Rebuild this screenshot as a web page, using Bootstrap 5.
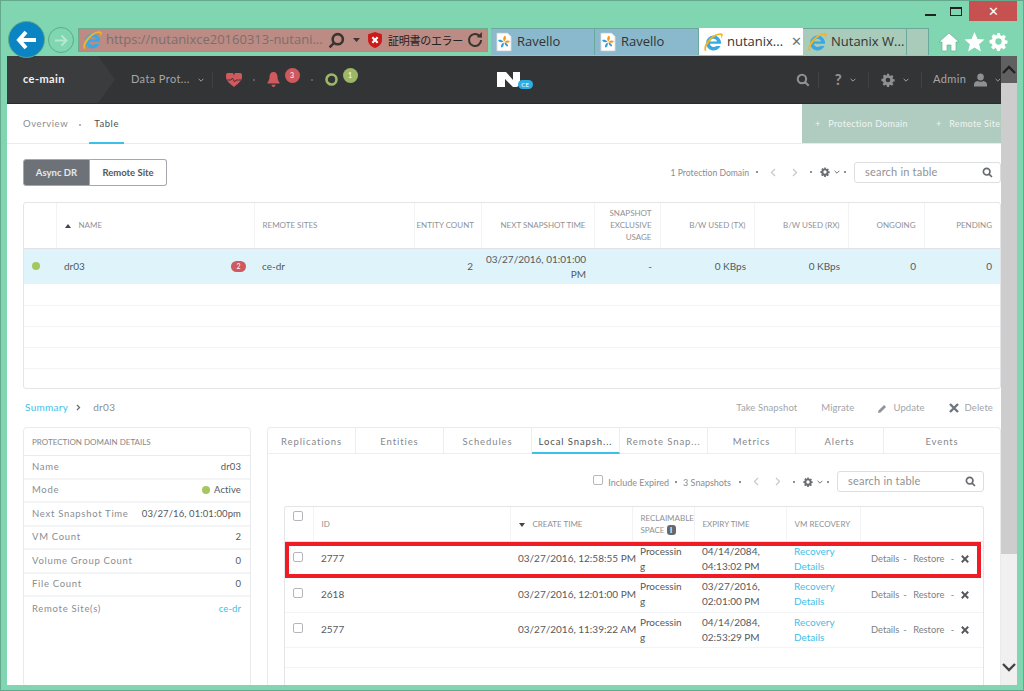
<!DOCTYPE html>
<html>
<head>
  <title>Nutanix - Protection Domains</title>
  <link href="https://cdn.jsdelivr.net/npm/bootstrap@5.3.2/dist/css/bootstrap.min.css" rel="stylesheet">
  <style>
    html, body { height: 100%; overflow: hidden; }
    body { font-family: Lato, "Liberation Sans", sans-serif; font-size: 10px; color: #55585c; background: #7fd6b0; }
    .win { width: 1024px; height: 691px; border: 1px solid #64a88d; padding: 0 6px 6px 6px; }

    /* browser chrome */
    .chrome { height: 55px; }
    .caption { height: 27px; }
    .cap-btn { width: 26px; height: 20px; }
    .cap-min { width: 11px; height: 2px; background: #222; margin-top: 8px; }
    .cap-max { width: 12px; height: 9px; border: 1px solid #222; border-top-width: 2px; }
    .cap-close { width: 48px; height: 20px; background: #c75050; color: #fff; font-size: 13px; line-height: 20px; text-align: center; }
    .nav-row { height: 28px; }
    .back-btn { width: 37px; height: 37px; border-radius: 50%; background: #0b84c4; border: 1px solid #5aa78e; margin-top: -7px; margin-left: 1px; position: relative; z-index: 3; }
    .fwd-btn { width: 26px; height: 26px; border-radius: 50%; border: 1px solid #5fa98f; margin-left: 3px; margin-top: -1px; }
    .addr { width: 410px; height: 24px; background: #bb8b84; border: 1px solid #6dab90; margin-left: 4px; font-family: "Open Sans", sans-serif; font-size: 13px; color: #7b6f6c; padding-left: 3px; white-space: nowrap; }
    .addr .cert { font-family: "Noto Sans CJK JP", sans-serif; font-size: 11px; color: #222; letter-spacing: -.3px; margin-left: 6px; }
    .mag { color: #3b3532; transform: scaleX(-1); }
    .tab-strip { margin-left: 3px; }
    .tab-b { height: 27px; width: 104px; background: #8ab9cd; border: 1px solid #6aa89b; border-width: 1px 1px 0 0; font-family: "Open Sans", sans-serif; font-size: 13px; color: #333; padding-left: 4px; white-space: nowrap; }
    .tab-b.on { background: #fff; border: 0; }
    .tab-b.idle { background: #a9cbb9; }
    .tab-b.blank { background: #a9cbb9; width: 22px; }
    .tab-x { margin-left: 4px; }
    .ie-tools { height: 27px; margin-left: 9px; }

    /* app frame */
    .frame { height: 629px; background: #fff; }
    .app { width: 994px; overflow: hidden; }
    .vscroll { width: 16px; background: #f0f0f0; }
    .vs-up { height: 27px; background: #606060; color: #222; }
    .vs-thumb { height: 471px; background: #cdcdcd; }
    .vs-down { padding-bottom: 13px; }

    .topbar { height: 48px; background: #333436; border-bottom: 1px solid #2a2b2d; color: #a6a7a8; font-size: 11px; letter-spacing: .4px; }
    .crumb { width: 108px; height: 47px; background: #3b3c3e; clip-path: polygon(0 0, 91px 0, 108px 50%, 91px 100%, 0 100%); color: #f2f2f2; font-weight: 700; padding-left: 16px; }
    .top-sep { width: 1px; height: 16px; background: #414244; }
    .heart { margin-left: 13px; }
    .dot-sep { width: 2px; height: 2px; background: #6c6d6f; border-radius: 50%; flex: none; }
    .top-dot { margin: 0 12px 0 11px; }
    .count { width: 15px; height: 15px; border-radius: 50%; color: #fff; font-size: 7px; text-align: center; line-height: 15px; margin: -8px 0 0 5px; }
    .bg-crit { background: #d0595e; }
    .bg-ok { background: #9cb767; }
    .logo { margin-left: 139px; margin-right: auto; }
    .ce-pill { background: #2bb0e6; color: #fff; font-size: 6px; line-height: 9px; width: 15px; margin: 0 0 -2px -2px; }
    .help { font-size: 15px; font-weight: 900; color: #8f9092; }
    .admin { width: 68px; margin-left: 7px; }
    .grey-icon { color: #8f9092; fill: #8f9092; }

    .subnav { height: 40px; border-bottom: 1px solid #e8eaec; }
    .sub-left { padding-left: 16px; height: 40px; }
    .subnav a { color: #8a8d91; text-decoration: none; font-size: 9.5px; letter-spacing: .6px; line-height: 40px; }
    .subnav .dot-sep { background: #9a9da1; margin: 2px 0 0 11px; }
    .subnav a.sub-tab { height: 40px; padding: 0 5px; border-bottom: 2px solid #3ebfe9; color: #4d5055; margin-left: 8px; }
    .sub-actions { width: 199px; height: 39px; background: #b0ccc0; color: #eef5f1; font-size: 9px; letter-spacing: .3px; white-space: nowrap; padding-left: 13px; gap: 28px; }

    .page-body { padding: 14px 0 0 16px; }
    .bar-top { height: 28px; }
    .toggle-btn { height: 27px; font-size: 9.5px; border: 1px solid #a4a8ad; font-weight: 700; line-height: 25px; text-align: center; }
    .tg-a { width: 67px; background: #6d7278; color: #e6e8ea; border-radius: 3px 0 0 3px; }
    .tg-b { width: 77px; background: #fff; color: #54575b; border-radius: 0 3px 3px 0; border-left: 0; }

    .search { width: 147px; height: 21px; border: 1px solid #dcdee1; border-radius: 3px; font-size: 11px; color: #8f9296; padding: 0 7px 0 10px; letter-spacing: .2px; }
    .search svg { color: #666a6e; }
    .tools { color: #8a8d91; font-size: 8.6px; }
    .tools > span:not(.chk) { padding-top: 2px; }
    .tools .gear-sm { fill: #6a6d71; }
    .tools .chev-sm { color: #6a6d71; }
    .g7 { margin-left: 7px; }
    .g12 { margin-left: 12px; }
    .g6 { margin: 0 6px; }
    .tools .chk { margin: -3px 5px 0 0; }

    .grid-box { border: 1px solid #e3e5e8; border-radius: 3px; overflow: hidden; margin-top: 16px; height: 187px; }
    table.pd { table-layout: fixed; width: 100%; margin: 0; border-collapse: collapse; }
    table.pd th { font-weight: 400; font-size: 8px; color: #8f9296; text-transform: uppercase; vertical-align: middle; border-right: 1px solid #f2f3f4; border-bottom: 1px solid #e0e2e5; padding: 0 8px; line-height: 12px; }
    table.pd th:last-child { border-right: 0; }
    table.pd td { font-size: 10px; color: #56595d; vertical-align: middle; padding: 0 8px; line-height: 15px; border-bottom: 1px solid #f3f4f5; }
    table.pd tr.sel td { background: #dff3fb; border-bottom: 0; padding-top: 1px; }
    table.pd th.tight { white-space: nowrap; padding-left: 2px; }
    table.pd td.next-time { padding-left: 3px; }
    .hd-row { height: 45px; }
    .sel { height: 36px; }
    .empty-row { height: 21px; }
    .w28 { width: 28px; } .w32 { width: 32px; } .w62 { width: 62px; } .w66 { width: 66px; } .w67 { width: 67px; }
    .w74 { width: 74px; } .w76 { width: 76px; } .w92 { width: 92px; } .w94 { width: 94px; } .w113 { width: 113px; }
    .w122 { width: 122px; } .w160 { width: 160px; } .w197 { width: 197px; } .w198 { width: 198px; }
    .status { width: 8px; height: 8px; border-radius: 50%; background: #a6c660; display: inline-block; }
    .alert-pill { width: 15px; height: 11px; border-radius: 6px; background: #d0595e; color: #fff; font-size: 7px; line-height: 11px; text-align: center; }

    .mid-bar { height: 38px; padding-right: 8px; }
    .crumb2 { font-size: 10px; letter-spacing: .3px; color: #8a8d91; padding: 0 0 2px 2px; }
    .crumb2 a, .link { color: #3ebfe9; text-decoration: none; }
    .actions { color: #a2a5a9; font-size: 9.5px; letter-spacing: .1px; }
    .x-gap { margin-left: 6px; }

    .details { width: 228px; height: 260px; border: 1px solid #e8eaec; border-radius: 4px; flex: none; }
    .det-head { height: 28px; font-size: 8px; color: #85888c; text-transform: uppercase; border-bottom: 1px solid #e8eaec; padding: 0 8px; }
    .det-row { height: 23.5px; font-size: 9.5px; letter-spacing: .7px; color: #8a8d91; border-bottom: 2px solid #f3f4f5; padding: 0 9px 0 8px; white-space: nowrap; }
    .det-row:last-child { border: 0; }
    .det-row > :last-child { color: #56595d; letter-spacing: .1px; }
    .det-row > a:last-child { color: #3ebfe9; text-decoration: none; }

    .tabs-panel { width: 734px; height: 260px; border: 1px solid #e8eaec; border-bottom: 0; border-radius: 4px 4px 0 0; flex: none; }
    .ptabs { height: 26px; border-bottom: 1px solid #eceef0; }
    .ptab { width: 88px; font-size: 9.5px; letter-spacing: .9px; color: #85888c; text-align: center; line-height: 27px; border-right: 1px solid #eceef0; white-space: nowrap; }
    .ptab.on { color: #4d5055; border-bottom: 2px solid #3ebfe9; height: 26px; }
    .ptab:last-child { border: 0; flex: 1; }
    .snap-tools { height: 52px; padding: 3px 16px 0 0; font-size: 9px; }
    .snap-wrap { position: relative; margin: 0 16px; border: 1px solid #e3e5e8; border-bottom: 0; border-radius: 3px 3px 0 0; }
    .red-mark { position: absolute; left: 0; top: 35px; width: 696px; height: 36px; border: 4px solid #ee1c25; pointer-events: none; }
    .chk { width: 10px; height: 10px; border: 1px solid #b4b8bc; border-radius: 2px; display: inline-block; background: #fff; }
    .snap-head { height: 34px; }
    table.pd th.chk-cell { vertical-align: top; padding: 4px 8px 0; }
    .snap .r1 { height: 35.5px; }
    table.pd td.date { white-space: nowrap; padding-right: 0; }
    table.pd td.wrap-all { word-break: break-all; }
    table.pd th.recl { white-space: nowrap; padding-right: 0; }
    .info-i { width: 9px; height: 10px; background: #666a6f; color: #fff; font-size: 7px; line-height: 10px; border-radius: 3px; display: inline-block; text-align: center; font-weight: 700; }
    table.pd td.row-act { color: #7c7f83; white-space: nowrap; font-size: 9.3px; padding: 0 0 0 11px; }
    .row-act svg { color: #55585c; margin-left: 3px; vertical-align: -1px; }
    .blank-row { height: 20px; }
  </style>
</head>
<body>

<svg width="0" height="0" class="position-absolute">
  <symbol id="ie" viewBox="0 0 20 20">
    <path fill-rule="evenodd" d="M10.500 3.500a7.500 7.500 0 1 0 7 10.500h-4.200a3.800 3.800 0 0 1-6.400-2.200H18a7.500 7.500 0 0 0-7.500-8.300zM7 9.500a3.600 3.600 0 0 1 7 0z" fill="#39a9e1"/>
    <path d="M2 19C-.5 16 4 7 10.500 3.500c4.500-2.500 8-3 9-1.500.7 1.200-.2 3-1.500 5 .3-1.800.6-3-.2-3.700-1.500-1.300-6.300 1-9.300 4C5 11.800 1.800 15.800 3.500 18.300 3 18.900 2.300 19.300 2 19z" fill="#f0b429"/>
  </symbol>
  <symbol id="rav" viewBox="0 0 20 22">
    <path d="M2 1h12l4 4v16H2z" fill="#fff" stroke="#c4c4c4" stroke-width=".8"/>
    <path d="M10 10.500C8.500 8 9 5 10.800 4c2.200 .7 1.800 4.500-.8 6.500zM10.500 11c2-1.800 4.500-2 6-.8-.8 2-4 2.300-6 .8z" fill="#f39a1e"/>
    <path d="M9.500 10.500C7.500 8.500 5 8 3.500 9c.6 2.200 3.800 2.800 6 1.500zM9.500 11.500c-2.200 1-3.300 3.500-2.700 5.500 2.300 .2 3.700-3 2.700-5.500zM10.500 11.500c.2 2.300 1.800 4.300 3.800 4.500.8-2-1.300-4.300-3.800-4.500z" fill="#2f9fd8"/>
  </symbol>
  <symbol id="gear" viewBox="-1 -1 18 18">
    <path fill-rule="evenodd" d="M6.600 0h2.800l.4 2.200 1.300.6 1.900-1.300 2 2-1.300 1.900.6 1.300 2.200.4v2.800l-2.200.4-.6 1.300 1.300 1.900-2 2-1.900-1.300-1.300.6-.4 2.200H6.600l-.4-2.200-1.300-.6-1.900 1.300-2-2 1.300-1.900-.6-1.300L-.5 9.400V6.600l2.200-.4.6-1.300L1.500 3l2-2 1.900 1.300 1.300-.6zM8 5a3 3 0 1 0 0 6 3 3 0 0 0 0-6z"/>
  </symbol>
  <symbol id="search" viewBox="0 0 16 16">
    <path fill="none" stroke="currentColor" stroke-width="2.400" d="M6.800 2a4.800 4.800 0 1 0 0 9.600 4.800 4.800 0 0 0 0-9.600zM10.300 10.300l4.200 4.200"/>
  </symbol>
  <symbol id="chev-d" viewBox="0 0 10 6">
    <path fill="none" stroke="currentColor" stroke-width="1.600" d="M1 1l4 4 4-4"/>
  </symbol>
  <symbol id="xmark" viewBox="0 0 10 10">
    <path fill="none" stroke="currentColor" stroke-width="2.400" d="M1 1l8 8M9 1l-8 8"/>
  </symbol>
  <symbol id="prev" viewBox="0 0 6 9">
    <path d="M5 1L1.500 4.500 5 8" fill="none" stroke="#c8cacd" stroke-width="1.300"/>
  </symbol>
  <symbol id="next" viewBox="0 0 6 9">
    <path d="M1 1l3.500 3.500L1 8" fill="none" stroke="#c8cacd" stroke-width="1.300"/>
  </symbol>
</svg>

<div class="win d-flex flex-column">

  <!-- IE chrome -->
  <div class="chrome">
    <div class="caption d-flex justify-content-end align-items-start">
      <div class="cap-btn d-flex align-items-center justify-content-center"><div class="cap-min"></div></div>
      <div class="cap-btn d-flex align-items-center justify-content-center"><div class="cap-max"></div></div>
      <div class="cap-close">&#10005;</div>
    </div>
    <div class="nav-row d-flex align-items-start">
      <div class="back-btn d-flex align-items-center justify-content-center">
        <svg width="22" height="20" viewBox="0 0 22 20"><path d="M10 2L3 10l7 8M3 10h17" fill="none" stroke="#fff" stroke-width="4"/></svg>
      </div>
      <div class="fwd-btn d-flex align-items-center justify-content-center">
        <svg width="14" height="13" viewBox="0 0 14 13"><path d="M7.500 1.500l5 5-5 5M12 6.500H1" fill="none" stroke="#b9e6d2" stroke-width="2"/></svg>
      </div>
      <div class="addr d-flex align-items-center">
        <svg width="20" height="20"><use href="#ie"/></svg>
        <span class="ms-1 flex-grow-1">https://nutanixce20160313-nutani...</span>
        <svg class="mag" width="17" height="17"><use href="#search"/></svg>
        <svg class="ms-2" width="7" height="4"><path d="M0 0h7L3.500 4z" fill="#3b3532"/></svg>
        <svg class="ms-2" width="14" height="16" viewBox="0 0 13 15"><path d="M6.500 0L13 2v6c0 3-3 6-6.500 7C3 14 0 11 0 8V2z" fill="#cc1a1a"/><path d="M4 5l5 5M9 5l-5 5" stroke="#fff" stroke-width="2"/></svg>
        <span class="cert">証明書のエラー</span>
        <svg class="ms-1 me-1" width="16" height="16" viewBox="0 0 14 14"><path d="M11 3.500a5.300 5.300 0 1 0 1.300 3.500" fill="none" stroke="#3b3532" stroke-width="1.800"/><path d="M8.500 4.500L13 5V0z" fill="#3b3532"/></svg>
      </div>
      <div class="tab-strip d-flex">
        <div class="tab-b d-flex align-items-center gap-1"><svg width="18" height="20"><use href="#rav"/></svg>Ravello</div>
        <div class="tab-b d-flex align-items-center gap-1"><svg width="18" height="20"><use href="#rav"/></svg>Ravello</div>
        <div class="tab-b on d-flex align-items-center gap-1"><svg width="20" height="20"><use href="#ie"/></svg>nutanix...<span class="tab-x text-secondary">&#10005;</span></div>
        <div class="tab-b idle d-flex align-items-center gap-1"><svg width="20" height="20"><use href="#ie"/></svg>Nutanix W...</div>
        <div class="tab-b blank"></div>
      </div>
      <div class="ie-tools d-flex align-items-center gap-1">
        <svg width="22" height="20" viewBox="0 0 22 20"><path d="M11 1L1 10h3v9h5v-6h4v6h5v-9h3z" fill="#fff" stroke="#5aa78e" stroke-width=".6"/></svg>
        <svg width="21" height="20" viewBox="0 0 21 20"><path d="M10.500 0l3 7 7 .5-5.400 4.700 1.800 7.300-6.400-3.900-6.400 3.900 1.800-7.300L.5 7.500l7-.5z" fill="#fff"/></svg>
        <svg width="19" height="19" fill="#fff"><use href="#gear"/></svg>
      </div>
    </div>
  </div>

  <!-- page -->
  <div class="frame d-flex">
    <div class="app">

      <div class="topbar d-flex align-items-center">
        <div class="crumb d-flex align-items-center">ce-main</div>
        <div class="ms-3 d-flex align-items-center gap-2">Data Prot...
          <svg width="6" height="4"><use href="#chev-d"/></svg>
        </div>
        <div class="top-sep ms-2"></div>
        <svg class="heart" width="16" height="14" viewBox="0 0 16 14"><path d="M8 14C3 10 0 7.500 0 4a4 4 0 0 1 8-1.500A4 4 0 0 1 16 4c0 3.500-3 6-8 10z" fill="#d0595e"/><path d="M1 7h4l1.500-2L8.500 9l1.500-2h5" fill="none" stroke="#333436" stroke-width=".9"/></svg>
        <div class="dot-sep top-dot"></div>
        <svg width="13" height="15" viewBox="0 0 12 15"><path d="M6 0c2.800 0 4 2 4 5 0 3 1 4 2 5.500v1H0v-1C1 9 2 8 2 5c0-3 1.200-5 4-5zM4 12.800h4C8 14.300 7 15 6 15s-2-.7-2-2.200z" fill="#d0595e"/></svg>
        <div class="count bg-crit">3</div>
        <div class="dot-sep top-dot"></div>
        <svg width="13" height="13" viewBox="0 0 13 13"><circle cx="6.500" cy="6.500" r="5" fill="none" stroke="#9cb767" stroke-width="2.600"/></svg>
        <div class="count bg-ok">1</div>

        <div class="logo d-flex align-items-end">
          <svg width="23" height="15" viewBox="0 0 23 15"><path d="M0 0h9l7 8V0h7v12l-3 3h-4L8 7v8H0z" fill="#fff"/></svg>
          <div class="ce-pill rounded-pill text-center">CE</div>
        </div>

        <svg class="grey-icon" width="14" height="14"><use href="#search"/></svg>
        <div class="top-sep mx-2"></div>
        <div class="d-flex align-items-center gap-2 mx-2">
          <span class="help">?</span>
          <svg width="6" height="4"><use href="#chev-d"/></svg>
        </div>
        <div class="top-sep mx-1"></div>
        <div class="d-flex align-items-center gap-2 mx-2">
          <svg class="grey-icon" width="14" height="14"><use href="#gear"/></svg>
          <svg width="6" height="4"><use href="#chev-d"/></svg>
        </div>
        <div class="top-sep mx-1"></div>
        <div class="admin d-flex align-items-center gap-1">
          <span>Admin</span>
          <svg class="ms-1" width="14" height="14" viewBox="0 0 14 14"><path d="M7 0a3.500 3.500 0 0 1 3.500 4c0 2-1 3.500-3.500 3.500S3.500 6 3.500 4A3.500 3.500 0 0 1 7 0zM0 12c0-3 3-4 4-4 1 1 5 1 6 0 1 0 4 1 4 4v2H0z" fill="#8f9092"/></svg>
          <svg class="ms-1" width="6" height="4"><use href="#chev-d"/></svg>
        </div>
      </div>

      <div class="subnav d-flex align-items-start justify-content-between">
        <div class="sub-left d-flex align-items-center">
          <a href="#">Overview</a>
          <div class="dot-sep"></div>
          <a href="#" class="sub-tab">Table</a>
        </div>
        <div class="sub-actions d-flex align-items-center">
          <span>+ &nbsp; Protection Domain</span>
          <span>+ &nbsp; Remote Site</span>
        </div>
      </div>

      <div class="page-body">
        <div class="bar-top d-flex justify-content-between align-items-center">
          <div class="d-flex">
            <div class="toggle-btn tg-a">Async DR</div>
            <div class="toggle-btn tg-b">Remote Site</div>
          </div>
          <div class="d-flex align-items-center tools">
            <span>1 Protection Domain</span>
            <div class="dot-sep g7"></div>
            <svg class="g12" width="6" height="9"><use href="#prev"/></svg>
            <svg class="ms-3" width="6" height="9"><use href="#next"/></svg>
            <div class="dot-sep g12"></div>
            <svg class="gear-sm ms-2" width="10" height="10"><use href="#gear"/></svg>
            <svg class="chev-sm ms-1" width="6" height="4"><use href="#chev-d"/></svg>
            <div class="dot-sep ms-1 me-2"></div>
            <div class="search d-flex align-items-center justify-content-between">
              <span>search in table</span>
              <svg width="11" height="11"><use href="#search"/></svg>
            </div>
          </div>
        </div>

        <div class="grid-box">
          <table class="pd">
            <colgroup>
              <col class="w32"><col class="w198"><col class="w160"><col class="w67"><col class="w113"><col class="w66"><col class="w94"><col class="w94"><col class="w76"><col>
            </colgroup>
            <thead>
              <tr class="hd-row">
                <th></th>
                <th><svg width="6" height="4" class="me-2"><path d="M3 0l3 4H0z" fill="#444"/></svg>Name</th>
                <th>Remote Sites</th>
                <th class="text-end tight">Entity Count</th>
                <th class="text-end">Next Snapshot Time</th>
                <th class="text-end">Snapshot Exclusive Usage</th>
                <th class="text-end">B/W Used (TX)</th>
                <th class="text-end">B/W Used (RX)</th>
                <th class="text-end">Ongoing</th>
                <th class="text-end">Pending</th>
              </tr>
            </thead>
            <tbody>
              <tr class="sel">
                <td><span class="status"></span></td>
                <td><div class="d-flex justify-content-between align-items-center">dr03<div class="alert-pill">2</div></div></td>
                <td>ce-dr</td>
                <td class="text-end">2</td>
                <td class="text-end next-time">03/27/2016, 01:01:00 PM</td>
                <td class="text-end">-</td>
                <td class="text-end">0 KBps</td>
                <td class="text-end">0 KBps</td>
                <td class="text-end">0</td>
                <td class="text-end">0</td>
              </tr>
              <tr class="empty-row"><td colspan="10"></td></tr>
              <tr class="empty-row"><td colspan="10"></td></tr>
              <tr class="empty-row"><td colspan="10"></td></tr>
              <tr class="empty-row"><td colspan="10"></td></tr>
            </tbody>
          </table>
        </div>

        <div class="mid-bar d-flex justify-content-between align-items-center">
          <div class="crumb2 d-flex align-items-center gap-2">
            <a href="#">Summary</a>
            <svg width="5" height="7" viewBox="0 0 5 7"><path d="M1 1l2.500 2.500L1 6" fill="none" stroke="#6a6d71" stroke-width="1.300"/></svg>
            <span class="ms-1">dr03</span>
          </div>
          <div class="actions d-flex align-items-center">
            <span>Take Snapshot</span>
            <span class="ms-4">Migrate</span>
            <svg class="ms-4" width="9" height="9" viewBox="0 0 9 9"><path d="M0 9l.6-2.500L6 1l2 2-5.500 5.400z" fill="#8f9296"/></svg>
            <span class="x-gap">Update</span>
            <svg class="ms-4 text-secondary" width="10" height="10"><use href="#xmark"/></svg>
            <span class="x-gap">Delete</span>
          </div>
        </div>

        <div class="d-flex gap-3">
          <!-- details -->
          <div class="details">
            <div class="det-head d-flex align-items-center">Protection Domain Details</div>
            <div class="det-row d-flex justify-content-between align-items-center"><span>Name</span><span>dr03</span></div>
            <div class="det-row d-flex justify-content-between align-items-center"><span>Mode</span><span class="d-flex align-items-center gap-1"><i class="status"></i>Active</span></div>
            <div class="det-row d-flex justify-content-between align-items-center"><span>Next Snapshot Time</span><span>03/27/16, 01:01:00pm</span></div>
            <div class="det-row d-flex justify-content-between align-items-center"><span>VM Count</span><span>2</span></div>
            <div class="det-row d-flex justify-content-between align-items-center"><span>Volume Group Count</span><span>0</span></div>
            <div class="det-row d-flex justify-content-between align-items-center"><span>File Count</span><span>0</span></div>
            <div class="det-row d-flex justify-content-between align-items-center"><span>Remote Site(s)</span><a href="#">ce-dr</a></div>
          </div>

          <!-- tabs -->
          <div class="tabs-panel">
            <div class="ptabs d-flex">
              <div class="ptab">Replications</div>
              <div class="ptab">Entities</div>
              <div class="ptab">Schedules</div>
              <div class="ptab on">Local Snapsh...</div>
              <div class="ptab">Remote Snap...</div>
              <div class="ptab">Metrics</div>
              <div class="ptab">Alerts</div>
              <div class="ptab">Events</div>
            </div>

            <div class="snap-tools d-flex justify-content-end align-items-center tools">
              <span class="chk"></span>
              <span>Include Expired</span>
              <div class="dot-sep g6"></div>
              <span>3 Snapshots</span>
              <div class="dot-sep ms-2"></div>
              <svg class="g12" width="6" height="9"><use href="#prev"/></svg>
              <svg class="ms-3" width="6" height="9"><use href="#next"/></svg>
              <div class="dot-sep g12"></div>
              <svg class="gear-sm ms-2" width="10" height="10"><use href="#gear"/></svg>
              <svg class="chev-sm ms-1" width="6" height="4"><use href="#chev-d"/></svg>
              <div class="dot-sep ms-1 me-2"></div>
              <div class="search d-flex align-items-center justify-content-between">
                <span>search in table</span>
                <svg width="11" height="11"><use href="#search"/></svg>
              </div>
            </div>

            <div class="snap-wrap">
              <table class="pd snap">
                <colgroup>
                  <col class="w28"><col class="w197"><col class="w122"><col class="w62"><col class="w92"><col class="w74"><col>
                </colgroup>
                <thead>
                  <tr class="snap-head">
                    <th class="chk-cell"><span class="chk"></span></th>
                    <th>ID</th>
                    <th><svg width="6" height="4" class="me-2"><path d="M0 0h6L3 4z" fill="#444"/></svg>Create Time</th>
                    <th class="recl">Reclaimable<br>Space <span class="info-i">i</span></th>
                    <th>Expiry Time</th>
                    <th>VM Recovery</th>
                    <th></th>
                  </tr>
                </thead>
                <tbody>
                  <tr class="r1">
                    <td class="px-2"><span class="chk"></span></td>
                    <td>2777</td>
                    <td class="date">03/27/2016, 12:58:55 PM</td>
                    <td class="wrap-all">Processing</td>
                    <td>04/14/2084, 04:13:02 PM</td>
                    <td><a href="#" class="link">Recovery Details</a></td>
                    <td class="row-act">Details<span class="mx-1">-</span> Restore <span class="mx-1">-</span><svg width="8" height="8"><use href="#xmark"/></svg></td>
                  </tr>
                  <tr class="r1">
                    <td class="px-2"><span class="chk"></span></td>
                    <td>2618</td>
                    <td class="date">03/27/2016, 12:01:00 PM</td>
                    <td class="wrap-all">Processing</td>
                    <td>03/27/2016, 02:01:00 PM</td>
                    <td><a href="#" class="link">Recovery Details</a></td>
                    <td class="row-act">Details<span class="mx-1">-</span> Restore <span class="mx-1">-</span><svg width="8" height="8"><use href="#xmark"/></svg></td>
                  </tr>
                  <tr class="r1">
                    <td class="px-2"><span class="chk"></span></td>
                    <td>2577</td>
                    <td class="date">03/27/2016, 11:39:22 AM</td>
                    <td class="wrap-all">Processing</td>
                    <td>04/14/2084, 02:53:29 PM</td>
                    <td><a href="#" class="link">Recovery Details</a></td>
                    <td class="row-act">Details<span class="mx-1">-</span> Restore <span class="mx-1">-</span><svg width="8" height="8"><use href="#xmark"/></svg></td>
                  </tr>
                  <tr class="blank-row"><td colspan="7"></td></tr>
                  <tr class="blank-row"><td colspan="7"></td></tr>
                </tbody>
              </table>
              <div class="red-mark"></div>
            </div>
          </div>
        </div>
      </div>
    </div>

    <div class="vscroll d-flex flex-column">
      <div class="vs-up d-flex align-items-center justify-content-center">
        <svg width="14" height="9" viewBox="0 0 14 9"><path d="M1 8l6-6 6 6" fill="none" stroke="currentColor" stroke-width="2.400"/></svg>
      </div>
      <div class="vs-thumb"></div>
      <div class="flex-grow-1"></div>
      <div class="vs-down d-flex justify-content-center">
        <svg width="14" height="9" viewBox="0 0 14 9"><path d="M1 1l6 6 6-6" fill="none" stroke="#444" stroke-width="2.400"/></svg>
      </div>
    </div>
  </div>
</div>

<script src="https://cdn.jsdelivr.net/npm/bootstrap@5.3.2/dist/js/bootstrap.bundle.min.js"></script>
</body>
</html>
